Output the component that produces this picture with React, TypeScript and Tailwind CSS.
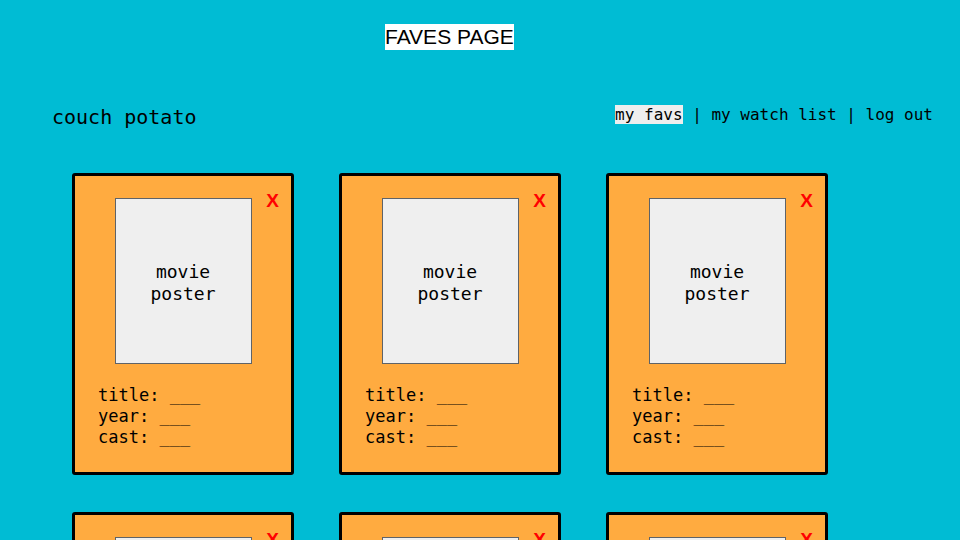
const mono = { fontFamily: '"DejaVu Sans Mono", "Liberation Mono", monospace' };

function MovieCard() {
  return (
    <div className="relative w-[222px] h-[302px] border-[3px] border-black rounded-[3px] bg-[#ffab40] pt-[22px]">
      <span className="absolute top-[14px] right-[12px] text-[19px] leading-[22px] font-bold text-[#ff0000] font-['Liberation_Sans',Arial,sans-serif]">
        X
      </span>
      <div className="mx-auto w-[137px] h-[166px] border border-[#5f6368] bg-[#efefef] flex items-center justify-center text-center text-[18px] leading-[22px] text-black">
        <span className="pt-[3px]">
          movie
          <br />
          poster
        </span>
      </div>
      <div className="mt-[21px] pl-[23px] text-[17px] leading-[21px] text-black">
        <div>title: ___</div>
        <div>year: ___</div>
        <div>cast: ___</div>
      </div>
    </div>
  );
}

export default function App() {
  return (
    <div className="h-[540px] w-[960px] overflow-hidden bg-[#00bcd4]" style={mono}>
      <div className="pl-[385px] pt-[24px]">
        <span className="bg-white text-black text-[21px] leading-[26px] font-['Liberation_Sans',Arial,sans-serif] inline-block">
          FAVES PAGE
        </span>
      </div>

      <div className="mt-[46px] flex items-center justify-between pl-[52px] pr-[27px]">
        <span className="text-[20px] text-black pt-[5px]">couch potato</span>
        <nav className="text-[16px] text-black">
          <span className="bg-[#eeeeee]">my favs</span> | my watch list | log out
        </nav>
      </div>

      <div className="mt-[41px] pl-[72px] grid grid-cols-[222px_222px_222px] gap-x-[45px] gap-y-[37px]">
        {Array.from({ length: 6 }).map((_, i) => (
          <MovieCard key={i} />
        ))}
      </div>
    </div>
  );
}
